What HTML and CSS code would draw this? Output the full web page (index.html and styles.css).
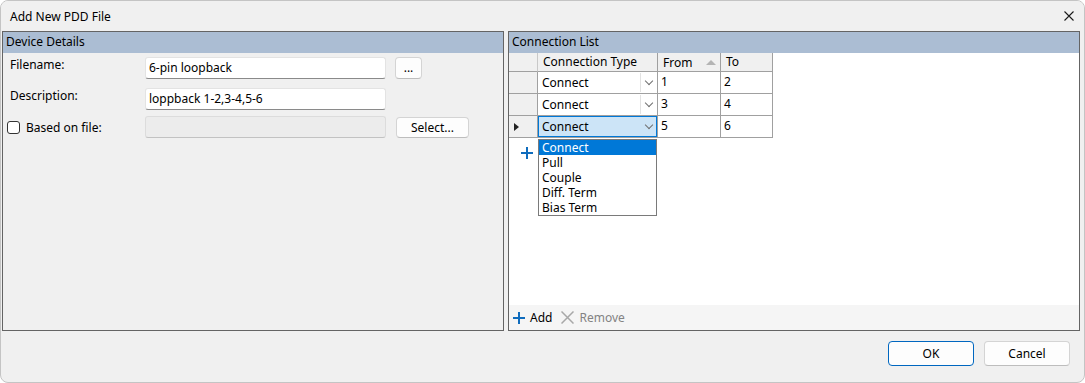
FILE: index.html
```html
<!DOCTYPE html>
<html lang="en">
<head>
    <meta charset="UTF-8">
    <title>Add New PDD File</title>
    <link rel="stylesheet" href="styles.css">
</head>
<body>
<div class="window">
    <div class="titlebar">
        <span class="title">Add New PDD File</span>
        <svg class="close" width="10" height="10" viewBox="0 0 10 10">
            <path d="M0.5 0.5L9.5 9.5M9.5 0.5L0.5 9.5" stroke="#1a1a1a" stroke-width="1.1"/>
        </svg>
    </div>
    <div class="panels">
        <section class="panel panel-left">
            <div class="panel-head">Device Details</div>
            <div class="form">
                <div class="form-row">
                    <label class="form-label">Filename:</label>
                    <div class="text-input">6-pin loopback</div>
                    <button class="btn btn-small">...</button>
                </div>
                <div class="form-row">
                    <label class="form-label">Description:</label>
                    <div class="text-input">loppback 1-2,3-4,5-6</div>
                </div>
                <div class="form-row form-row-check">
                    <label class="form-label check-label"><span class="checkbox"></span>Based on file:</label>
                    <div class="text-input text-input-disabled"></div>
                    <button class="btn btn-select">Select...</button>
                </div>
            </div>
        </section>
        <section class="panel panel-right">
            <div class="panel-head">Connection List</div>
            <div class="grid-area">
                <div class="grid">
                    <div class="cell hcell"></div>
                    <div class="cell hcell">Connection Type</div>
                    <div class="cell hcell sort-cell">From<span class="sort-arrow"></span></div>
                    <div class="cell hcell">To</div>

                    <div class="cell rowhead"></div>
                    <div class="cell combo-cell"><div class="combo"><span>Connect</span><span class="chev"></span></div></div>
                    <div class="cell">1</div>
                    <div class="cell">2</div>

                    <div class="cell rowhead"></div>
                    <div class="cell combo-cell"><div class="combo"><span>Connect</span><span class="chev"></span></div></div>
                    <div class="cell">3</div>
                    <div class="cell">4</div>

                    <div class="cell rowhead"><span class="row-pointer"></span></div>
                    <div class="cell combo-cell"><div class="combo combo-active"><span>Connect</span><span class="chev"></span></div></div>
                    <div class="cell">5</div>
                    <div class="cell">6</div>
                </div>
                <div class="new-row">
                    <svg width="12" height="12" viewBox="0 0 12 12"><path d="M6 0V12M0 6H12" stroke="#0f6cbd" stroke-width="2"/></svg>
                </div>
                <ul class="dropdown">
                    <li class="selected">Connect</li>
                    <li>Pull</li>
                    <li>Couple</li>
                    <li>Diff. Term</li>
                    <li>Bias Term</li>
                </ul>
            </div>
            <div class="toolbar">
                <span class="tool">
                    <svg width="12" height="12" viewBox="0 0 12 12"><path d="M6 0V12M0 6H12" stroke="#0f6cbd" stroke-width="2"/></svg>
                    Add
                </span>
                <span class="tool tool-disabled">
                    <svg width="13" height="13" viewBox="0 0 13 13"><path d="M0.5 0.5L12.5 12.5M12.5 0.5L0.5 12.5" stroke="#a8a8a8" stroke-width="1.5"/></svg>
                    Remove
                </span>
            </div>
        </section>
    </div>
    <div class="footer">
        <button class="btn btn-dialog btn-default">OK</button>
        <button class="btn btn-dialog">Cancel</button>
    </div>
</div>
</body>
</html>
```

FILE: styles.css
```css
*{
    margin: 0;
    padding: 0;
    box-sizing: border-box;
}
body{
    font-family: "Noto Sans", "Liberation Sans", sans-serif;
    font-size: 12px;
    color: #000;
    background: #fff;
}
.window{
    width: 1085px;
    height: 383px;
    border: 1px solid #c4c4c4;
    border-radius: 8px;
    background-color: #f0f0f0;
    display: flex;
    flex-direction: column;
    overflow: hidden;
}
.titlebar{
    height: 30px;
    display: flex;
    align-items: center;
    justify-content: space-between;
    padding: 0 10px 0 9px;
    background-color: #f0f0f0;
}
.title{
    line-height: 16px;
    margin-top: 1px;
}
.panels{
    height: 300px;
    display: flex;
    gap: 4px;
    padding: 0 4px 0 1px;
}
.panel{
    border: 1px solid #646464;
    display: flex;
    flex-direction: column;
}
.panel-left{
    width: 502px;
}
.panel-right{
    flex: 1;
}
.panel-head{
    height: 21px;
    line-height: 20px;
    padding-left: 3px;
    background-color: #abbdd3;
}
/* left form */
.form{
    display: flex;
    flex-direction: column;
    padding: 3px 0 0 0;
}
.form-row{
    display: flex;
    align-items: flex-start;
    height: 31px;
}
.form-row-check{
    align-items: center;
    height: 22px;
    margin-top: -2px;
}
.form-label{
    width: 142px;
    padding-left: 7px;
    line-height: 16px;
    margin-top: 1px;
}
.check-label{
    display: flex;
    align-items: center;
    padding-left: 4px;
    margin-top: 1px;
}
.checkbox{
    width: 13px;
    height: 13px;
    border: 1px solid #333;
    border-radius: 3px;
    background: #fff;
    margin-right: 6px;
}
.text-input{
    width: 241px;
    height: 22px;
    margin-top: 1px;
    background: #fff;
    border: 1px solid #e3e3e3;
    border-bottom-color: #8a8a8a;
    border-radius: 3px;
    padding: 0 3px;
    line-height: 20px;
}
.form-row-check .text-input{
    margin-top: 0;
}
.text-input-disabled{
    background: #ececec;
    border-color: #dcdcdc;
    border-bottom-color: #c2c2c2;
}
.btn{
    font-family: inherit;
    font-size: 12px;
    color: #000;
    background: #fdfdfd;
    border: 1px solid #d4d4d4;
    border-bottom-color: #bdbdbd;
    border-radius: 4px;
}
.btn-small{
    width: 27px;
    height: 22px;
    margin: 1px 0 0 9px;
    line-height: 14px;
}
.btn-select{
    width: 73px;
    height: 21px;
    margin-left: 10px;
}
/* grid */
.grid-area{
    position: relative;
    flex: 1;
    background: #fff;
}
.grid{
    display: grid;
    grid-template-columns: 29px 120px 63px 52px;
    grid-template-rows: 19px 22px 22px 22px;
}
.cell{
    border-right: 1px solid #a0a0a0;
    border-bottom: 1px solid #a0a0a0;
    padding-left: 3px;
    line-height: 20px;
    background: #fff;
}
.hcell{
    background: #f0f0f0;
    line-height: 17px;
    padding-left: 5px;
}
.hcell:first-child{
    border-right-color: #c8c8c8;
}
.sort-cell{
    display: flex;
    align-items: center;
    justify-content: space-between;
    padding-right: 4px;
}
.sort-arrow{
    width: 0;
    height: 0;
    border-left: 5px solid transparent;
    border-right: 5px solid transparent;
    border-bottom: 5px solid #b4b4b4;
}
.rowhead{
    background: #f0f0f0;
    display: flex;
    align-items: center;
    padding-left: 5px;
}
.row-pointer{
    width: 0;
    height: 0;
    border-top: 4px solid transparent;
    border-bottom: 4px solid transparent;
    border-left: 5px solid #222;
}
.combo-cell{
    padding: 0;
}
.combo{
    height: 21px;
    display: flex;
    justify-content: space-between;
    align-items: center;
    padding-left: 3px;
    border: 1px solid transparent;
}
.combo .chev{
    width: 16px;
    height: 19px;
    border-left: 1px solid #e2e2e2;
    position: relative;
}
.combo .chev::after{
    content: "";
    position: absolute;
    left: 5px;
    top: 5px;
    width: 5px;
    height: 5px;
    border-right: 1px solid #707070;
    border-bottom: 1px solid #707070;
    transform: rotate(45deg);
}
.combo-active{
    background: #cce4f7;
    border-color: #0078d7;
}
.combo-active .chev{
    border-left-color: transparent;
}
.new-row{
    display: flex;
    align-items: center;
    padding: 9px 0 0 12px;
}
.dropdown{
    position: absolute;
    left: 29px;
    top: 86px;
    width: 119px;
    list-style: none;
    background: #fff;
    border: 1px solid #7a7a7a;
}
.dropdown li{
    height: 15px;
    line-height: 15px;
    padding-left: 3px;
}
.dropdown li.selected{
    background: #0078d7;
    color: #fff;
}
.toolbar{
    height: 25px;
    background: #f5f5f5;
    display: flex;
    align-items: center;
    gap: 9px;
    padding-left: 4px;
}
.tool{
    display: flex;
    align-items: center;
    gap: 5px;
}
.tool-disabled{
    color: #838383;
}
/* footer */
.footer{
    flex: 1;
    display: flex;
    justify-content: flex-end;
    align-items: flex-start;
    gap: 10px;
    padding: 10px 14px 0 0;
}
.btn-dialog{
    width: 86px;
    height: 25px;
}
.btn-default{
    border-color: #0067c0;
}
```
